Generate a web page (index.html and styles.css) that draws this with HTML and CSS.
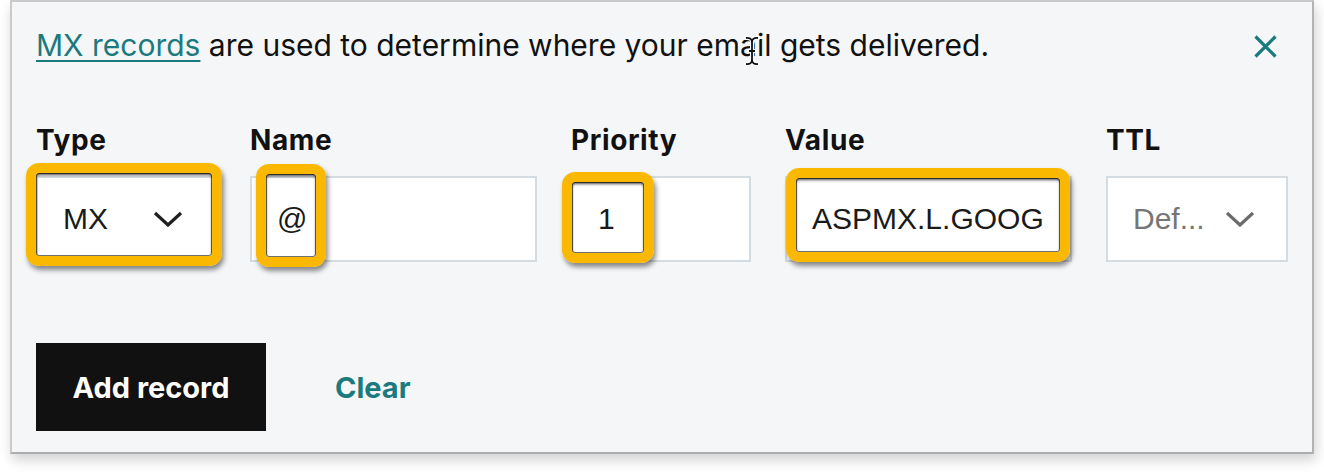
FILE: index.html
```html
<!DOCTYPE html>
<html lang="en">
<head>
<meta charset="utf-8">
<title>MX record</title>
<link rel="stylesheet" href="styles.css">
</head>
<body>
<div class="panel">
  <div class="intro">
    <p class="intro-text"><a class="intro-link" href="#">MX records</a> are used to determine where your email gets delivered.</p>
    <button class="close" aria-label="Close">
      <svg width="23" height="23" viewBox="0 0 23 23"><path d="M1.5 1.5 L21.5 21.5 M21.5 1.5 L1.5 21.5" stroke="#1b7a7e" stroke-width="3.2" fill="none"/></svg>
    </button>
  </div>

  <div class="fields">
    <div class="field">
      <div class="label">Type</div>
      <div class="control">
        <span class="value">MX</span>
        <svg class="chev" width="30" height="16" viewBox="0 0 30 16"><path d="M2 2 L15 14 L28 2" stroke="#1f1f1f" stroke-width="3.2" fill="none"/></svg>
        <span class="hl hl-type"></span>
      </div>
    </div>
    <div class="field">
      <div class="label">Name</div>
      <div class="control">
        <span class="value">@</span>
        <span class="hl hl-name"></span>
      </div>
    </div>
    <div class="field">
      <div class="label">Priority</div>
      <div class="control">
        <span class="value">1</span>
        <span class="hl hl-prio"></span>
      </div>
    </div>
    <div class="field">
      <div class="label">Value</div>
      <div class="control">
        <span class="value">ASPMX.L.GOOG</span>
        <span class="hl hl-value"></span>
      </div>
    </div>
    <div class="field">
      <div class="label">TTL</div>
      <div class="control">
        <span class="value muted">Def...</span>
        <svg class="chev" width="30" height="16" viewBox="0 0 30 16"><path d="M2 2 L15 14 L28 2" stroke="#6b6b6b" stroke-width="3.2" fill="none"/></svg>
      </div>
    </div>
  </div>

  <div class="actions">
    <button class="btn-primary">Add record</button>
    <button class="btn-link">Clear</button>
  </div>

  <svg class="cursor" width="16" height="30" viewBox="0 0 16 30">
    <path d="M2 2 Q8 1.5 8 6 Q8 1.5 14 2 M8 6 L8 24 M5 15 L11 15 M2 28 Q8 28.5 8 24 Q8 28.5 14 28" stroke="#fff" stroke-width="4" fill="none" stroke-linecap="round"/>
    <path d="M2 2 Q8 1.5 8 6 Q8 1.5 14 2 M8 6 L8 24 M5 15 L11 15 M2 28 Q8 28.5 8 24 Q8 28.5 14 28" stroke="#111" stroke-width="1.8" fill="none"/>
  </svg>
</div>
</body>
</html>
```

FILE: styles.css
```css
* { box-sizing: border-box; }

html, body {
  margin: 0;
  padding: 0;
  background: #ffffff;
}

body {
  width: 1324px;
  height: 474px;
  overflow: hidden;
  font-family: "Inter", "Noto Sans", sans-serif;
  color: #111111;
}

.panel {
  position: relative;
  margin-left: 10px;
  width: 1304px;
  height: 454px;
  background: #f5f6f8;
  border: 2px solid #c9cacc;
  border-right-color: #b3b3b3;
  border-bottom-color: #adadad;
  box-shadow: 2px 6px 12px rgba(0, 0, 0, 0.18);
  padding: 21px 24px 0 24px;
}

.intro {
  display: flex;
  align-items: center;
  justify-content: space-between;
  height: 44px;
}

.intro-text {
  margin: 0;
  font-size: 30px;
  line-height: 44px;
  color: #111111;
}

.intro-link {
  color: #1b7a7e;
  text-decoration: underline;
  text-decoration-thickness: 2px;
  text-underline-offset: 4px;
}

.close {
  border: 0;
  background: transparent;
  padding: 0;
  margin-right: 11px;
  margin-top: 2px;
  width: 23px;
  height: 23px;
  display: flex;
}

.fields {
  display: grid;
  grid-template-columns: 180px 287px 180px 287px 182px;
  column-gap: 34px;
  margin-top: 56px;
}

.field {
  display: flex;
  flex-direction: column;
}

.label {
  font-size: 28px;
  font-weight: 700;
  letter-spacing: 0.6px;
  line-height: 34px;
  height: 34px;
  margin-bottom: 19px;
  color: #111111;
}

.control {
  position: relative;
  height: 86px;
  background: #ffffff;
  border: 2px solid #d5dce1;
  display: flex;
  align-items: center;
  justify-content: space-between;
  padding: 0 31px 0 25px;
}

.value {
  font-family: "Liberation Sans", Arial, sans-serif;
  font-size: 30px;
  color: #1a1a1a;
  white-space: nowrap;
}

.value.muted {
  color: #767676;
}

.chev {
  display: block;
  flex: none;
}

.hl {
  position: absolute;
  border: 10px solid #fbb800;
  border-radius: 13px;
  box-shadow:
    2px 4px 5px rgba(0, 0, 0, 0.45),
    inset 0 2px 3px rgba(0, 0, 0, 0.7),
    inset 0 0 0 1px rgba(0, 0, 0, 0.55);
  pointer-events: none;
}

.hl-type  { left: -12px; top: -15px; width: 196px; height: 103px; }
.hl-name  { left: 4px;   top: -14px; width: 70px;  height: 103px; }
.hl-prio  { left: -11px; top: -6px;  width: 92px;  height: 91px; }
.hl-value { left: -1px;  top: -10px; width: 284px; height: 94px; }

.actions {
  display: flex;
  align-items: center;
  margin-top: 81px;
}

.btn-primary {
  width: 230px;
  height: 88px;
  border: 0;
  background: #111111;
  color: #ffffff;
  font-family: "Inter", "Noto Sans", sans-serif;
  font-size: 29px;
  font-weight: 700;
  padding: 0;
}

.btn-link {
  border: 0;
  background: transparent;
  color: #1b7a7e;
  font-family: "Inter", "Noto Sans", sans-serif;
  font-size: 29px;
  font-weight: 700;
  margin-left: 69px;
  padding: 0;
}

.cursor {
  position: absolute;
  left: 732px;
  top: 34px;
}
```
